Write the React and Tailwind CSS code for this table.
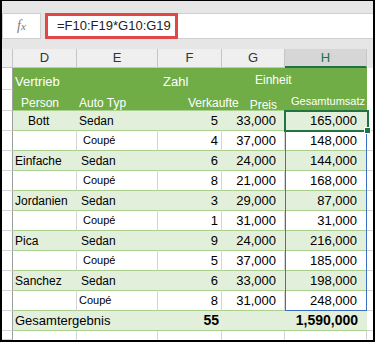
const rows = [
  { name: 'Bott', namePad: 'pl-[15px]', type: 'Sedan', typePad: 'pl-[2px]', qty: 5, price: '33,000', total: '165,000' },
  { name: '', type: 'Coupé', typePad: 'pl-[6px]', qty: 4, price: '37,000', total: '148,000' },
  { name: 'Einfache', type: 'Sedan', typePad: 'pl-[4px]', qty: 6, price: '24,000', total: '144,000' },
  { name: '', type: 'Coupé', typePad: 'pl-[6px]', qty: 8, price: '21,000', total: '168,000' },
  { name: 'Jordanien', type: 'Sedan', typePad: 'pl-[4px]', qty: 3, price: '29,000', total: '87,000' },
  { name: '', type: 'Coupé', typePad: 'pl-[6px]', qty: 1, price: '31,000', total: '31,000' },
  { name: 'Pica', type: 'Sedan', typePad: 'pl-[4px]', qty: 9, price: '24,000', total: '216,000' },
  { name: '', type: 'Coupé', typePad: 'pl-[6px]', qty: 5, price: '37,000', total: '185,000' },
  { name: 'Sanchez', type: 'Sedan', typePad: 'pl-[4px]', qty: 6, price: '33,000', total: '198,000' },
  { name: '', type: 'Coupé', typePad: 'pl-[2px]', qty: 8, price: '31,000', total: '248,000' },
];

const columns = [
  { key: 'D', w: 'w-[64px]' },
  { key: 'E', w: 'w-[81px]' },
  { key: 'F', w: 'w-[64px]' },
  { key: 'G', w: 'w-[63px]' },
  { key: 'H', w: 'w-[82px]' },
];

const RowHead = ({ h }) => (
  <div className={`w-[11px] ${h} shrink-0 bg-white border-r border-b border-r-[#9e9e9e] border-b-[#d4d4d4]`} />
);

const DataRow = ({ row, green }) => {
  const cell = `h-full shrink-0 flex items-center border-r border-b border-b-[#a9d08e] ${
    green ? 'bg-[#e2efda] border-r-[#e2efda]' : 'bg-white border-r-[#d4d4d4]'
  }`;
  return (
    <div className="flex h-[20px]">
      <RowHead h="h-full" />
      <div className={`${cell} w-[64px] text-[12px] ${row.namePad || 'pl-[2px]'}`}>{row.name}</div>
      <div className={`${cell} w-[81px] ${row.type === 'Coupé' ? 'text-[11px]' : 'text-[12px]'} ${row.typePad}`}>
        {row.type}
      </div>
      <div className={`${cell} w-[64px] justify-end pr-[3px] text-[13px]`}>{row.qty}</div>
      <div className={`${cell} w-[63px] justify-end pr-[8px] text-[13px]`}>{row.price}</div>
      <div className={`${cell} w-[82px] justify-end pr-[9px] text-[13px]`}>{row.total}</div>
      <div className="flex-1 h-full bg-white border-b border-b-[#d4d4d4]" />
    </div>
  );
};

export default function App() {
  return (
    <div className="w-[375px] h-[342px] bg-white border-black border-t border-x-2 border-b-2 flex flex-col overflow-hidden font-['Liberation_Sans',Arial,sans-serif] text-black">
      {/* ribbon edge */}
      <div className="h-[12px] bg-[#e6e6e6] shrink-0" />

      {/* formula bar */}
      <div className="h-[26px] flex bg-[#e6e6e6] shrink-0">
        <div className="w-[39px] h-full bg-white border border-[#cfcfcf] flex items-center justify-center">
          <span className="font-['Liberation_Serif',serif] italic text-[14px] text-[#7a7a7a] leading-none">
            f<span className="text-[11px]">x</span>
          </span>
        </div>
        <div className="ml-[4px] flex-1 h-full bg-white border-y border-[#d0d0d0] flex">
          <div className="w-[133px] h-[26px] -mt-px border-[3px] border-[#e24747] flex items-center pl-[9px] text-[13px] text-[#222] whitespace-nowrap">
            =F10:F19*G10:G19
          </div>
        </div>
      </div>

      <div className="h-[10px] bg-[#e6e6e6] shrink-0" />

      {/* column letters */}
      <div className="h-[19px] flex shrink-0 bg-[#e6e6e6] text-[13px] text-[#333]">
        <div className="w-[11px] h-full bg-[#efefef] border-r border-b border-[#c6c6c6]" />
        {columns.map((c) =>
          c.key === 'H' ? (
            <div
              key={c.key}
              className={`${c.w} h-full bg-[#d6d6d6] border-r border-r-[#c6c6c6] border-b-2 border-b-[#217346] flex items-center justify-center text-[#217346]`}
            >
              {c.key}
            </div>
          ) : (
            <div
              key={c.key}
              className={`${c.w} h-full bg-[#efefef] border-r border-b border-[#c6c6c6] flex items-center justify-center`}
            >
              {c.key}
            </div>
          )
        )}
        <div className="flex-1" />
      </div>

      {/* green header */}
      <div className="flex h-[22px] shrink-0 text-white">
        <RowHead h="h-full" />
        <div className="w-[354px] h-full bg-[#70ad47] flex">
          <div className="w-[64px] pl-[2px] pt-[7px] text-[13px] leading-[13px]">Vertrieb</div>
          <div className="w-[81px]" />
          <div className="w-[64px] pl-[5px] pt-[7px] text-[13px] leading-[13px]">Zahl</div>
          <div className="w-[63px] pl-[33px] pt-[6px] text-[12px] leading-[12px] whitespace-nowrap">Einheit</div>
          <div className="w-[82px]" />
        </div>
        <div className="flex-1 bg-white" />
      </div>
      <div className="flex h-[21px] shrink-0 text-white">
        <RowHead h="h-full" />
        <div className="w-[354px] h-full bg-[#70ad47] flex border-b border-[#a9d08e]">
          <div className="w-[64px] shrink-0 pl-[8px] pt-[7px] text-[12px] leading-[12px]">Person</div>
          <div className="w-[81px] shrink-0 pl-[2px] pt-[7px] text-[12px] leading-[12px]">Auto Typ</div>
          <div className="w-[64px] shrink-0 pl-[30px] pt-[7px] text-[12px] leading-[12px] whitespace-nowrap">Verkaufte</div>
          <div className="w-[63px] shrink-0 pr-[8px] pt-[9px] text-[12px] leading-[12px] text-right">Preis</div>
          <div className="w-[82px] shrink-0 pl-[6px] pt-[6px] text-[11px] leading-[11px] whitespace-nowrap">Gesamtumsatz</div>
        </div>
        <div className="flex-1 bg-white" />
      </div>

      {/* data */}
      <div className="relative flex flex-col shrink-0">
        {rows.map((row, i) => (
          <DataRow key={i} row={row} green={i % 2 === 0} />
        ))}

        {/* selection */}
        <div className="absolute left-[283px] top-[20px] w-[82px] h-[180px] border border-[#3b6fc4] pointer-events-none" />
        <div className="absolute left-[282px] top-[-1px] w-[85px] h-[22px] border-2 border-[#217346] pointer-events-none" />
        <div className="absolute left-[362px] top-[16px] w-[7px] h-[7px] bg-[#217346] border border-white" />
      </div>

      {/* total */}
      <div className="flex h-[20px] shrink-0">
        <RowHead h="h-full" />
        <div className="w-[354px] h-full bg-[#e2efda] border-b border-[#a9d08e] flex items-center">
          <div className="w-[145px] pl-[2px] text-[13px]">Gesamtergebnis</div>
          <div className="w-[64px] pr-[3px] text-right text-[14px] font-bold">55</div>
          <div className="w-[63px]" />
          <div className="w-[82px] pr-[9px] text-right text-[14px] font-bold">1,590,000</div>
        </div>
        <div className="flex-1 bg-white border-b border-[#d4d4d4]" />
      </div>

      {/* trailing empty row */}
      <div className="flex flex-1">
        <RowHead h="h-full" />
        {columns.map((c) => (
          <div key={c.key} className={`${c.w} h-full border-r border-[#d4d4d4]`} />
        ))}
        <div className="flex-1" />
      </div>
    </div>
  );
}
